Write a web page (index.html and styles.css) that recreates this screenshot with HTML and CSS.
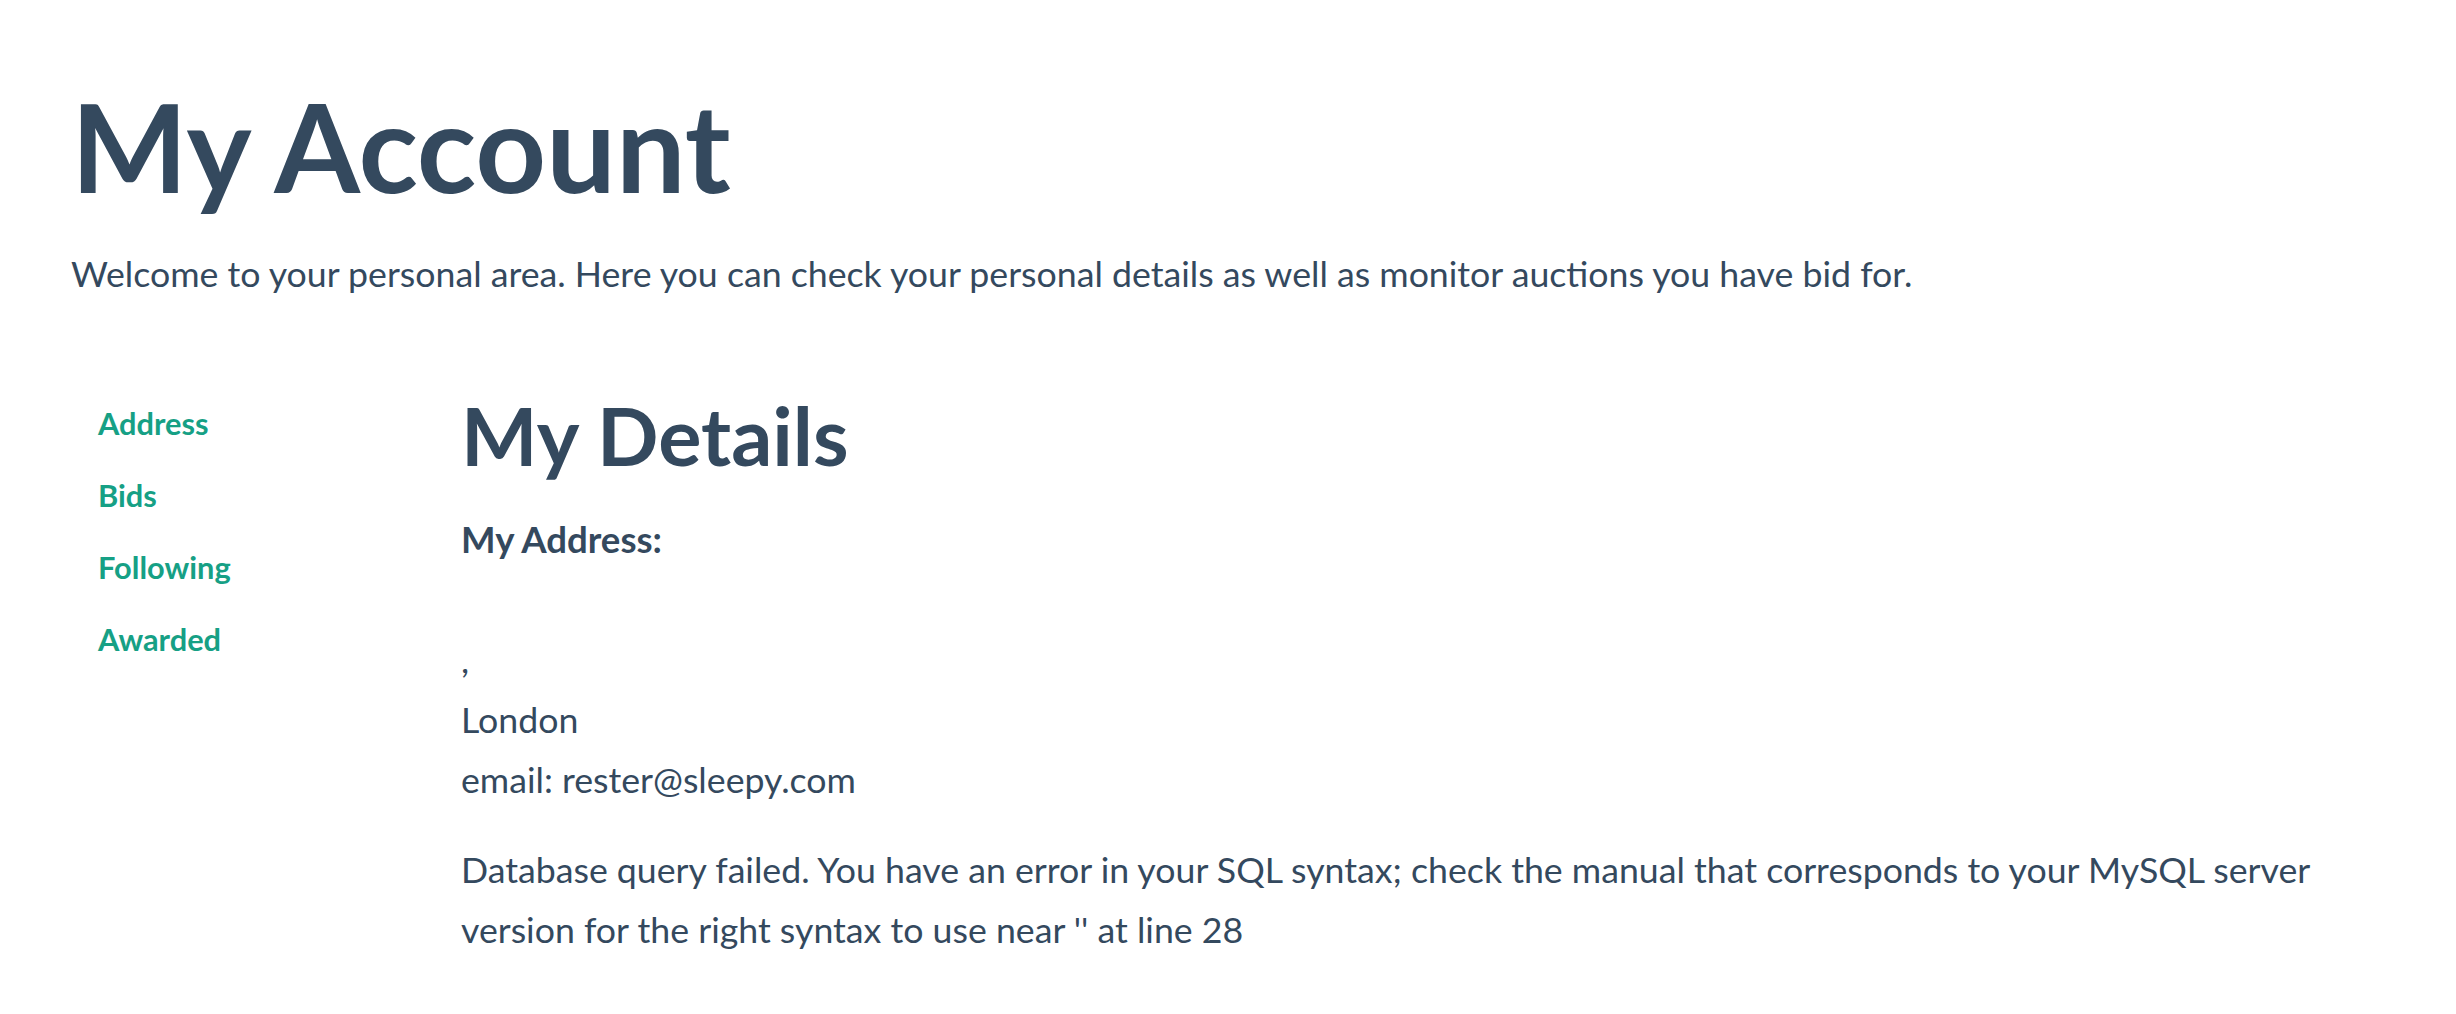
FILE: index.html
```html
<!DOCTYPE html>
<html lang="en">
<head>
<meta charset="utf-8">
<title>My Account</title>
<link rel="stylesheet" href="styles.css">
</head>
<body>
<div class="page">
  <header class="page-header">
    <h1 class="title">My Account</h1>
    <p class="intro">Welcome to your personal area. Here you can check your personal details as well as monitor auctions you have bid for.</p>
  </header>
  <div class="layout">
    <nav class="side-nav">
      <a class="side-link" href="#">Address</a>
      <a class="side-link" href="#">Bids</a>
      <a class="side-link" href="#">Following</a>
      <a class="side-link" href="#">Awarded</a>
    </nav>
    <main class="content">
      <h2 class="section-title">My Details</h2>
      <p class="address"><strong class="label">My Address:</strong><br><br>,<br>London<br>email: rester@sleepy.com</p>
      <p class="error">Database query failed. You have an error in your SQL syntax; check the manual that corresponds to your MySQL server version for the right syntax to use near '' at line 28</p>
    </main>
  </div>
</div>
</body>
</html>
```
FILE: styles.css
```css
html, body {
  margin: 0;
  padding: 0;
  background: #ffffff;
}

body {
  font-family: Lato, "Open Sans", "Liberation Sans", sans-serif;
  color: #34495e;
  font-size: 35.7px;
  line-height: 60px;
}

.page {
  padding: 78px 71px 0 71px;
}

.title {
  margin: 0;
  font-size: 123.5px;
  line-height: 134px;
  font-weight: 700;
}

.intro {
  margin: 32px 0 0 0;
}

.layout {
  display: flex;
  margin-top: 84px;
}

.side-nav {
  display: flex;
  flex-direction: column;
  width: 390px;
  flex: none;
}

.side-link {
  display: block;
  padding-left: 27px;
  font-size: 30.8px;
  line-height: 72px;
  font-weight: 700;
  color: #16a085;
  text-decoration: none;
}

.content {
  flex: 1;
  min-width: 0;
}

.section-title {
  margin: 2px 0 0 0;
  font-size: 81px;
  line-height: 90px;
  font-weight: 700;
}

.address {
  margin: 29px 0 0 0;
}

.label {
  font-size: 36.6px;
  font-weight: 700;
}

.error {
  margin: 30px 0 0 0;
}
```
